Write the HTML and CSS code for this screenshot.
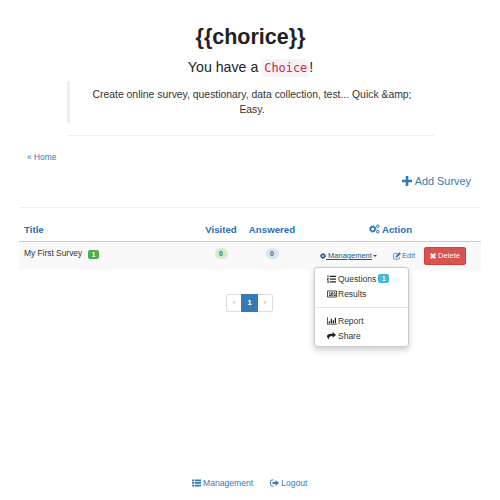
FILE: index.html
```
<!DOCTYPE html>
<html lang="en">
<head>
<meta charset="utf-8">
<title>chorice</title>
<link rel="stylesheet" href="styles.css">
</head>
<body>
<header class="hero">
  <h1>{{chorice}}</h1>
  <p class="lead">You have a <code>Choice</code>!</p>
  <blockquote>Create online survey, questionary, data collection, test... Quick &amp;amp;<br>Easy.</blockquote>
</header>
<main>
  <nav class="crumb"><a href="#">« Home</a></nav>
  <div class="toolbar">
    <a href="#"><svg class="plus" viewBox="0 0 10 10"><path d="M3.7 0h2.6v3.7H10v2.6H6.3V10H3.7V6.3H0V3.7h3.7z"/></svg>Add Survey</a>
  </div>
  <table>
    <colgroup><col class="c-title"><col class="c-visited"><col class="c-answered"><col class="c-action"></colgroup>
    <thead>
      <tr><th class="title">Title</th><th>Visited</th><th>Answered</th>
      <th class="action"><svg class="cogs" viewBox="0 0 22 20"><g fill="none" stroke="currentColor"><circle cx="7.5" cy="10" r="4.6" stroke-width="3"/><circle cx="7.500" cy="10" r="6.5" stroke-width="2" stroke-dasharray="2.6 2.5"/><circle cx="17.5" cy="4.5" r="2.6" stroke-width="2"/><circle cx="17.5" cy="15.5" r="2.6" stroke-width="2"/></g></svg>Action</th></tr>
    </thead>
    <tbody>
      <tr>
        <td class="title">My First Survey<span class="label green">1</span></td>
        <td><span class="pill visited">0</span></td>
        <td><span class="pill answered">0</span></td>
        <td class="actions"><div class="row">
          <div class="dropdown">
            <a class="toggle" href="#"><svg class="cog" viewBox="0 0 12 12"><g fill="none" stroke="currentColor"><circle cx="6" cy="6" r="3.3" stroke-width="2.8"/><circle cx="6" cy="6" r="5" stroke-width="2" stroke-dasharray="2 1.93"/></g></svg><span> Management</span><i class="caret"></i></a>
            <ul class="menu">
              <li><svg viewBox="0 0 16 14"><path d="M5 1h11v2.3H5zM5 6h11v2.3H5zM5 11h11v2.3H5zM1 0h1.5v4H1zM0 5h3v1.3L1.5 8H3v1H0V7.8L1.6 6H0zM0 10h3v4H0v-1h2v-.6H1v-.8h1V11H0z"/></svg>Questions<span class="label blue">1</span></li>
              <li><svg class="wide" viewBox="0 0 20 14"><path fill="none" stroke="currentColor" stroke-width="1.6" d="M1 1h18v12H1zM4 4.5h2V10M4 10h4M9 4.5h3v5H9zM14 4.5h2V10M13.500 10h4"/></svg>Results</li>
              <li class="divider"></li>
              <li><svg class="wide" viewBox="0 0 20 15"><path d="M0 0h1.500v13H20v1.500H0zM3.500 8H6v4H3.500zM7.500 3H10v9H7.500zM11.500 6H14v6h-2.500zM15.500 1H18v11h-2.500z"/></svg>Report</li>
              <li><svg viewBox="0 0 16 14"><path d="M10 0l6 5-6 5V7C5 7 3 8.500 3.800 13 1 11 0 9 0 7.500 0 4 4 3 10 3z"/></svg>Share</li>
            </ul>
          </div>
          <a class="edit" href="#"><svg viewBox="0 0 15 14"><path fill="none" stroke="currentColor" stroke-width="1.400" d="M9 2H3Q1 2 1 4v7q0 2 2 2h7q2 0 2-2V9"/><path d="M12 0l3 3-7 7H5V7zM6.200 8v1h1z"/></svg>Edit</a>
          <a class="delete" href="#"><svg viewBox="0 0 10 10"><path d="M2.300 0L5 2.700 7.700 0 10 2.300 7.300 5 10 7.700 7.700 10 5 7.300 2.300 10 0 7.700 2.700 5 0 2.300z"/></svg>Delete</a>
        </div></td>
      </tr>
    </tbody>
  </table>
  <ul class="pages"><li>‹</li><li class="active">1</li><li>›</li></ul>
</main>
<footer>
  <a href="#"><svg viewBox="0 0 18 14"><path d="M0 0h4.500v3.500H0zM6 0h12v3.500H6zM0 5.200h4.500v3.500H0zM6 5.200h12v3.500H6zM0 10.400h4.500v3.500H0zM6 10.400h12v3.500H6z"/></svg>Management</a>
  <a href="#"><svg viewBox="0 0 18 14"><path fill="none" stroke="currentColor" stroke-width="2" d="M7 1H4Q1 1 1 4v6q0 3 3 3h3"/><path d="M5 5h6V1l7 6-7 6V9H5z"/></svg>Logout</a>
</footer>
</body>
</html>
```
FILE: styles.css
```
* { box-sizing: border-box; }
body {
  margin: 0;
  height: 500px;
  display: flex;
  flex-direction: column;
  background: #fff;
  color: #333;
  font: 8.4px/12px "Liberation Sans", Arial, sans-serif;
  white-space: nowrap;
}
a { color: #337ab7; text-decoration: none; }
svg { fill: currentColor; flex: none; }
ul { list-style: none; margin: 0; padding: 0; }

.hero {
  width: 367px;
  height: 136px;
  margin-left: 67px;
  padding-top: 25px;
  border-bottom: 1px solid #eee;
  text-align: center;
}
h1 { margin: 0; font-size: 21.500px; line-height: 25px; color: #222; }
.lead { margin: 6px 0 0; font-size: 14.200px; line-height: 22px; color: #222; }
code {
  padding: 2px 2px;
  border-radius: 3px;
  background: #f9f2f4;
  color: #c7254e;
  font: 11.900px "DejaVu Sans Mono", monospace;
}
blockquote {
  height: 42px;
  margin: 3px 0 0;
  padding-top: 6px;
  border-left: 3px solid #eee;
  font-size: 10.400px;
  line-height: 15px;
}

main { margin: 0 19px; width: 462px; }
.crumb { margin: 15px 0 0 8px; }
.toolbar {
  height: 45px;
  padding: 10px 10px 0 0;
  border-bottom: 1px solid #eee;
  text-align: right;
  font-size: 10.900px;
  line-height: 16px;
}
.plus { width: 10px; height: 10px; margin-right: 3px; vertical-align: -1px; }

table { width: 462px; margin-top: 11px; border-collapse: separate; border-spacing: 0; table-layout: fixed; }
.c-title { width: 178px; }
.c-visited { width: 48px; }
.c-answered { width: 54px; }
th {
  height: 23px;
  padding: 0;
  border-bottom: 1px solid #ccc;
  color: #2a6fb0;
  font-size: 9.700px;
}
th.title, td.title { padding-left: 5px; text-align: left; }
th.action { padding-left: 1px; }
.cogs { width: 11px; height: 10px; margin-right: 2px; vertical-align: -1px; }
td { height: 28px; padding: 0; background: #f9f9f9; text-align: center; vertical-align: top; line-height: 22px; }
.label {
  display: inline-block;
  width: 11px;
  height: 9px;
  border-radius: 2px;
  color: #fff;
  font-size: 6.500px;
  font-weight: bold;
  line-height: 9px;
  text-align: center;
  vertical-align: -1px;
}
.green { margin-left: 6px; background: #4cae4c; }
.blue { margin-left: 2px; background: #46b8da; }
.pill { display: inline-block; width: 13px; height: 11px; border-radius: 6px; font-size: 7px; font-weight: bold; line-height: 11px; vertical-align: middle; }
.visited { background: #d6ecc9; color: #3c763d; }
.answered { background: #cfe9f5; color: #31708f; }

.row { display: flex; align-items: center; height: 28px; padding: 0 15px 0 21px; font-size: 7.600px; line-height: 12px; }
.dropdown { position: relative; width: 73px; text-align: left; }
.toggle { display: flex; align-items: center; color: #1d5489; font-size: 7.500px; }
.toggle span { text-decoration: underline; white-space: pre; }
.cog { width: 6px; height: 6px; }
.caret { margin-left: 1px; border: 2.500px solid transparent; border-top-color: currentColor; border-bottom: 0; }
.menu {
  position: absolute;
  z-index: 1;
  top: 17px;
  left: -6px;
  width: 95px;
  height: 80px;
  padding: 3px 0;
  border: 1px solid #ccc;
  border-radius: 3px;
  background: #fff;
  box-shadow: 0 3px 6px rgba(0, 0, 0, .2);
  color: #333;
}
.menu li { display: flex; align-items: center; height: 15px; padding-left: 12px; font-size: 8.500px; }
.menu svg { width: 9px; height: 8px; margin-right: 2px; color: #222; }
.menu .wide { width: 10px; margin-right: 1px; }
.menu .divider { height: 1px; margin: 6px 0 5px; background: #e5e5e5; }
.edit { display: flex; align-items: center; width: 31px; }
.edit svg { width: 8px; height: 8px; margin-right: 1px; }
.delete {
  display: flex;
  align-items: center;
  justify-content: center;
  width: 42px;
  height: 18px;
  border: 1px solid #d43f3a;
  border-radius: 2px;
  background: #d9534f;
  color: #fff;
}
.delete svg { width: 6px; height: 6px; margin-right: 2px; }

.pages { display: flex; width: 47px; height: 18px; margin: 24px 0 0 207px; border: 1px solid #ddd; border-radius: 2px; line-height: 16px; text-align: center; }
.pages li { flex: 1; color: #999; font-size: 7.500px; }
.pages .active { flex: 0 0 17px; margin: -1px 0; background: #337ab7; color: #fff; font-weight: bold; line-height: 18px; }

footer { display: flex; gap: 17px; margin: auto 0 11px 192px; font-size: 8.600px; }
footer a { display: flex; align-items: center; }
footer svg { width: 9px; height: 8px; margin-right: 2px; }
```
